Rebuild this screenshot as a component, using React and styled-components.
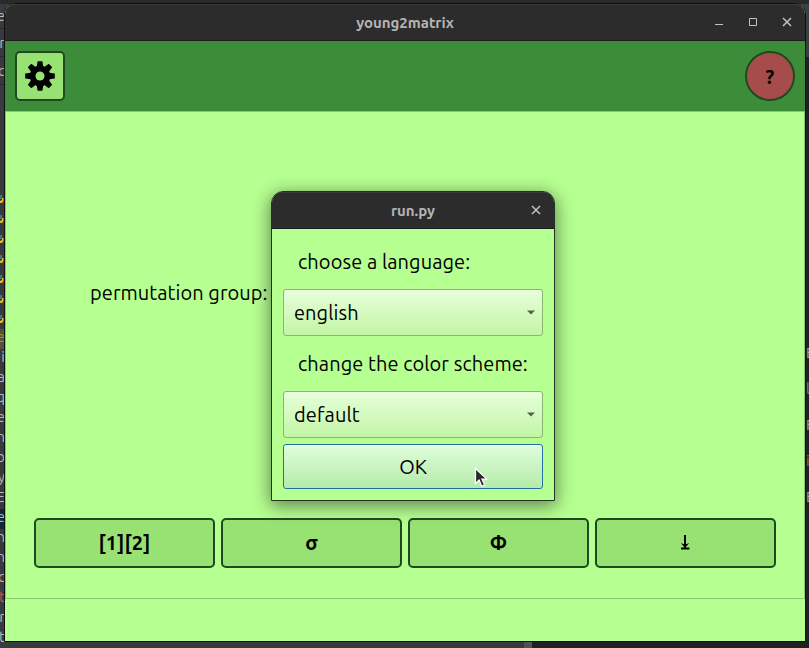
import React from "react";
import styled, { createGlobalStyle } from "styled-components";

const Global = createGlobalStyle`
  * { box-sizing: border-box; }
  body { margin: 0; overflow: hidden; background: #2b2b2c; }
`;

const face = `Ubuntu, "Noto Sans", "DejaVu Sans", sans-serif`;

const Desktop = styled.div`
  position: relative;
  width: 809px;
  height: 648px;
  overflow: hidden;
  background: #222122;
  font-family: ${face};
  display: grid;
  grid-template-columns: 524px 8px 1fr;
`;

const Editor = styled.div`
  background: #393a3d;
  border-top: 4px solid #2a2a2a;
  overflow: hidden;
`;

const Scrollbar = styled.div`
  background: linear-gradient(#2a2a2a 40px, #525254 40px);
`;

const Terminal = styled.div`
  display: flex;
  flex-direction: column;
  align-items: flex-end;
  padding-top: 4px;
  overflow: hidden;
  background: linear-gradient(#2a2a2a 4px, #3d4043 4px 57px, #222122 57px);
`;

const EditorLine = styled.div`
  display: flex;
  justify-content: flex-end;
  align-items: center;
  width: 5px;
  height: ${(p) => p.$h || 20}px;
  overflow: hidden;
  white-space: nowrap;
  font-size: 15px;
  line-height: 18px;
  padding-bottom: ${(p) => p.$lift || 0}px;
  color: ${(p) => p.$color || "#b4b8bb"};
  background: ${(p) => p.$bg || "transparent"};
  border-bottom: ${(p) => (p.$rule ? "1px solid #292a2b" : "0")};
`;

const TerminalLine = styled.div`
  width: 3px;
  height: ${(p) => p.$h}px;
  overflow: hidden;
  font-size: 15px;
  line-height: 20px;
  color: ${(p) => p.$color || "#a8a8a8"};
`;

const Window = styled.main`
  position: absolute;
  left: 4px;
  top: 3px;
  width: 802px;
  height: 639px;
  display: flex;
  flex-direction: column;
  overflow: hidden;
  background: #b6ff91;
  border: 1px solid #0d100c;
  border-radius: 11px 11px 0 0;
`;

const TitleBar = styled.header`
  display: grid;
  grid-template-columns: 110px 1fr 110px;
  align-items: center;
  flex: none;
  height: 37px;
  background: #2c2c2c;
  border-top: 1px solid #3b3b3b;
  border-bottom: 1px solid #1b1b1b;
`;

const Title = styled.h1`
  grid-column: 2;
  margin: 0;
  text-align: center;
  font-size: 15px;
  line-height: 20px;
  font-weight: 700;
  color: #b5b5b5;
`;

const Controls = styled.div`
  display: flex;
  justify-content: flex-end;
  gap: 22px;
  padding-right: 12px;
  padding-bottom: 2px;
`;

const ControlIcon = styled.svg`
  display: block;
  width: 12px;
  height: 12px;
  fill: none;
  stroke: #c2c2c2;
  stroke-width: ${(p) => p.$w || 1};
`;

const Toolbar = styled.div`
  display: flex;
  justify-content: space-between;
  align-items: center;
  flex: none;
  height: 70px;
  padding: 0 10px;
  background: #3d8c3a;
`;

const ToolButton = styled.button`
  display: grid;
  place-items: center;
  width: 50px;
  height: 50px;
  padding: 0;
  border: 2px solid #1f4a20;
  border-radius: ${(p) => (p.$round ? "50%" : "5px")};
  background: ${(p) => (p.$round ? "#a64c4b" : "#98e273")};
  color: #000;
  font: 700 20px ${face};
`;

const Workspace = styled.section`
  display: flex;
  flex-direction: column;
  flex: none;
  height: 488px;
  border: 1px solid #8cc670;
  padding: 0 28px 30px;
`;

const FormRow = styled.div`
  flex: 1;
  padding: 168px 0 0 56px;
`;

const Label = styled.label`
  display: block;
  white-space: nowrap;
  font-size: 20px;
  line-height: 26px;
  letter-spacing: 0.07px;
  color: #000;
`;

const Actions = styled.div`
  display: grid;
  grid-template-columns: repeat(4, 181px);
  gap: 6px;
`;

const ActionButton = styled.button`
  display: grid;
  place-items: center;
  height: 50px;
  padding: 0 0 2px;
  border: 2px solid #1f4a20;
  border-radius: 5px;
  background: #98e273;
  color: #000;
  font: 700 20px ${face};
  letter-spacing: 0.1px;
`;

const Dialog = styled.section`
  position: absolute;
  left: 271px;
  top: 191px;
  width: 284px;
  height: 310px;
  overflow: hidden;
  border: 1px solid #243320;
  border-radius: 12px 12px 0 0;
  background: #b6ff91;
`;

const DialogShadow = styled.div`
  position: absolute;
  left: 271px;
  top: 191px;
  width: 284px;
  height: 310px;
  border-radius: 12px 12px 0 0;
  box-shadow: 0 4px 18px 1px rgba(0, 0, 0, 0.48);
`;

const DialogBody = styled.div`
  display: flex;
  flex-direction: column;
  padding: 19px 11px 0;
`;

const Caption = styled(Label)`
  height: 41px;
  padding: 1px 0 0 15px;
`;

const Combo = styled.div`
  display: flex;
  justify-content: space-between;
  align-items: center;
  height: 47px;
  margin-bottom: ${(p) => p.$below}px;
  padding: 0 7px 0 10px;
  border: 1px solid #87b573;
  border-radius: 3px;
  background: linear-gradient(#e7ffdb, #c3f5a5);
  box-shadow: inset 0 1px #efffe7;
`;

const Caret = styled.svg`
  width: 8px;
  height: 5px;
  fill: #4d6544;
`;

const OkButton = styled.button`
  height: 45px;
  padding: 0;
  border: 1px solid #2070a1;
  border-radius: 3px;
  background: linear-gradient(#e0fddc, #b5ebaa);
  box-shadow: inset 0 1px #edffe9;
  color: #000;
  font: 20px ${face};
`;

const Cursor = styled.svg`
  position: absolute;
  left: 474px;
  top: 467px;
  width: 14px;
  height: 21px;
`;

const CloseIcon = () => (
  <ControlIcon viewBox="0 0 12 12" $w="1.5">
    <path d="M2 2l8 8M10 2l-8 8" />
  </ControlIcon>
);

const Gear = () => (
  <svg width="30" height="30" viewBox="-15 -15 30 30">
    <g fill="#000">
      {[0, 45, 90, 135].map((a) => (
        <path key={a} transform={`rotate(${a})`} d="M-2.4-14.8H2.4L3.3-9V9L2.4 14.8H-2.4L-3.3 9V-9Z" />
      ))}
      <circle r="10.4" />
    </g>
    <circle r="4.5" fill="#98e273" />
  </svg>
);

const PythonMark = () => (
  <svg width="5" height="12" viewBox="0 0 5 12">
    <path d="M0 2h2v4H0z" fill="#397799" />
    <path d="M2 5h1.5v3L2 10H0V8l2-1z" fill="#e5b91b" />
  </svg>
);

const ComboField = ({ value, below }) => (
  <Combo $below={below}>
    <Label as="span">{value}</Label>
    <Caret viewBox="0 0 8 5"><path d="M0 .5h8L4 4.5z" /></Caret>
  </Combo>
);

const codeLines = [
  { t: "e", bg: "#55513a", color: "#929126" },
  { t: "i" }, { t: "a" }, { t: "q" }, { t: "e" }, { t: "n" }, { t: "o" }, { t: "y" }, { t: "E" },
  { t: "e", bg: "#0d293e" },
  { t: "n" }, { t: "n" }, { t: "c" }, { t: "t", color: "#c75450" }, { t: "r" }, { t: "t" },
];

export default function App() {
  return (
    <>
      <Global />
      <Desktop>
        <Editor>
          <EditorLine $h={25} $rule>e</EditorLine>
          <EditorLine $h={28} $rule>r</EditorLine>
          <EditorLine $h={28} $rule>c</EditorLine>
          <EditorLine $h={104} />
          {Array.from({ length: 7 }, (_, i) => (
            <EditorLine key={i}><PythonMark /></EditorLine>
          ))}
          {codeLines.map((l, i) => (
            <EditorLine key={i} $bg={l.bg} $color={l.color} $lift={4}>{l.t}</EditorLine>
          ))}
        </Editor>
        <Scrollbar />
        <Terminal>
          <TerminalLine $h={339} />
          <TerminalLine $h={36}>E</TerminalLine>
          <TerminalLine $h={36} $color="#638aa8">l</TerminalLine>
          <TerminalLine $h={36}>F</TerminalLine>
          <TerminalLine $h={36} $color="#94725a">i</TerminalLine>
          <TerminalLine $h={36}>E</TerminalLine>
        </Terminal>

        <Window>
          <TitleBar>
            <Title>young2matrix</Title>
            <Controls>
              <ControlIcon viewBox="0 0 12 12"><path d="M2 8.5h8" /></ControlIcon>
              <ControlIcon viewBox="0 0 12 12"><path d="M2.5 2.5h7v7h-7z" /></ControlIcon>
              <CloseIcon />
            </Controls>
          </TitleBar>
          <Toolbar>
            <ToolButton aria-label="settings"><Gear /></ToolButton>
            <ToolButton $round>?</ToolButton>
          </Toolbar>
          <Workspace>
            <FormRow><Label>permutation group:</Label></FormRow>
            <Actions>
              <ActionButton>[1][2]</ActionButton>
              <ActionButton>σ</ActionButton>
              <ActionButton>Φ</ActionButton>
              <ActionButton aria-label="download">
                <svg width="11" height="16" viewBox="0 0 11 16">
                  <path d="M5 1v13M1 14.5h8.4" stroke="#000" strokeWidth="2" />
                  <path d="M.8 9L5 14l4.2-5-4.2 1.8z" fill="#000" />
                </svg>
              </ActionButton>
            </Actions>
          </Workspace>
        </Window>

        <DialogShadow />
        <Dialog>
          <TitleBar>
            <Title>run.py</Title>
            <Controls><CloseIcon /></Controls>
          </TitleBar>
          <DialogBody>
            <Caption>choose a language:</Caption>
            <ComboField value="english" below={14} />
            <Caption>change the color scheme:</Caption>
            <ComboField value="default" below={6} />
            <OkButton>OK</OkButton>
          </DialogBody>
        </Dialog>

        <Cursor viewBox="0 0 14 21">
          <path
            d="M1.5 1.5v15l3.6-3.4 2.7 6.2 2.8-1.2-2.7-6h4.9z"
            fill="#2b2b2b"
            stroke="#fff"
            strokeWidth="1.2"
          />
        </Cursor>
      </Desktop>
    </>
  );
}
